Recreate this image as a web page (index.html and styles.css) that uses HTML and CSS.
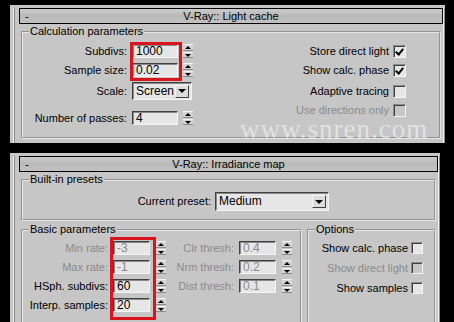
FILE: index.html
```html
<!DOCTYPE html>
<html lang="en">
<head>
    <meta charset="UTF-8">
    <title>V-Ray rollouts</title>
    <link rel="stylesheet" href="styles.css">
</head>
<body>
    <div class="rollout rollout-lc">
        <div class="frame">
            <div class="titlebar"><span class="minus">-</span><span class="title">V-Ray:: Light cache</span></div>
            <fieldset class="group group-calc">
                <legend>Calculation parameters</legend>
                <div class="calc-cols">
                    <div class="param-list">
                        <div class="param row-a"><span class="lbl">Subdivs:</span><span class="field">1000</span><span class="spin"><i></i><i></i></span></div>
                        <div class="param row-b"><span class="lbl">Sample size:</span><span class="field">0.02</span><span class="spin"><i></i><i></i></span></div>
                        <div class="param row-c"><span class="lbl">Scale:</span><span class="combo combo-scale">Screen<b class="drop"></b></span></div>
                        <div class="param row-d"><span class="lbl">Number of passes:</span><span class="field">4</span><span class="spin"><i></i><i></i></span></div>
                    </div>
                    <div class="check-list">
                        <div class="check ck-a"><span>Store direct light</span><span class="box on"></span></div>
                        <div class="check ck-b"><span>Show calc. phase</span><span class="box on"></span></div>
                        <div class="check ck-c"><span>Adaptive tracing</span><span class="box"></span></div>
                        <div class="check ck-d off"><span>Use directions only</span><span class="box"></span></div>
                    </div>
                </div>
            </fieldset>
        </div>
    </div>

    <div class="rollout rollout-im">
        <div class="frame">
            <div class="titlebar"><span class="minus">-</span><span class="title">V-Ray:: Irradiance map</span></div>
            <fieldset class="group group-presets">
                <legend>Built-in presets</legend>
                <div class="preset-row"><span class="lbl">Current preset:</span><span class="combo combo-preset">Medium<b class="drop"></b></span></div>
            </fieldset>
            <div class="group-pair">
                <fieldset class="group group-basic">
                    <legend>Basic parameters</legend>
                    <div class="bp-row">
                        <span class="lbl c1 off">Min rate:</span><span class="field sm off">-3</span><span class="spin"><i></i><i></i></span>
                        <span class="lbl c2 off">Clr thresh:</span><span class="field sm off">0.4</span><span class="spin"><i></i><i></i></span>
                    </div>
                    <div class="bp-row">
                        <span class="lbl c1 off">Max rate:</span><span class="field sm off">-1</span><span class="spin"><i></i><i></i></span>
                        <span class="lbl c2 off">Nrm thresh:</span><span class="field sm off">0.2</span><span class="spin"><i></i><i></i></span>
                    </div>
                    <div class="bp-row">
                        <span class="lbl c1">HSph. subdivs:</span><span class="field sm">60</span><span class="spin"><i></i><i></i></span>
                        <span class="lbl c2 off">Dist thresh:</span><span class="field sm off">0.1</span><span class="spin"><i></i><i></i></span>
                    </div>
                    <div class="bp-row">
                        <span class="lbl c1">Interp. samples:</span><span class="field sm">20</span><span class="spin"><i></i><i></i></span>
                    </div>
                </fieldset>
                <fieldset class="group group-options">
                    <legend>Options</legend>
                    <div class="check"><span>Show calc. phase</span><span class="box"></span></div>
                    <div class="check off"><span>Show direct light</span><span class="box"></span></div>
                    <div class="check"><span>Show samples</span><span class="box"></span></div>
                </fieldset>
            </div>
        </div>
    </div>

    <!-- red annotation boxes and watermark sit over the panels -->
    <div class="mark mark-top"></div>
    <div class="mark mark-bottom"></div>
    <div class="watermark">www.snren.com</div>
</body>
</html>
```

FILE: styles.css
```css
body {
    margin: 0;
    padding: 5px 0 0 10px;
    background-color: #000;
    font-family: "Liberation Sans", Arial, sans-serif;
    font-size: 11px;
    line-height: 13px;
    color: #000;
    height: 322px;
    box-sizing: border-box;
    overflow: hidden;
    position: relative;
}
.rollout {
    background-color: #c6c6c6;
    padding: 3px 0 0 3px;
    box-sizing: border-box;
}
.rollout-lc {
    width: 435px;
    height: 138px;
    margin-bottom: 10px;
}
.rollout-im {
    width: 430px;
    height: 175px;
}
.frame {
    height: 100%;
    border-left: 1px solid #f0f0f0;
    border-right: 1px solid #8a8a8a;
    box-shadow: inset 1px 0 #8a8a8a, inset -1px 0 #f0f0f0;
    padding: 0 1px 0 5px;
    box-sizing: border-box;
}
.titlebar {
    height: 16px;
    border: 1px solid #000;
    box-sizing: border-box;
    background: linear-gradient(#cbcbcb, #b9b9b9 50%, #c2c2c2);
    display: flex;
    align-items: center;
    position: relative;
}
.minus {
    padding-left: 5px;
    width: 20px;
}
.title {
    flex: 1;
    text-align: center;
    padding-right: 25px;
}
.group {
    margin: 1px 2px 0;
    padding: 0;
    border: 2px groove #e6e6e6;
    min-width: 0;
}
.group legend {
    padding: 0 1px;
    margin-left: 6px;
    line-height: 13px;
}
.lbl {
    text-align: right;
    white-space: nowrap;
}
.off {
    color: #8a8a8a;
}
.field {
    width: 46px;
    height: 14px;
    box-sizing: border-box;
    background-color: #e6e6e6;
    border-style: solid;
    border-width: 1px;
    border-color: #404040 #f4f4f4 #f4f4f4 #404040;
    box-shadow: inset 1px 1px #8a8a8a;
    padding: 0 0 0 3px;
    line-height: 12px;
    font-size: 12px;
}
.field.sm {
    width: 37px;
}
.spin {
    width: 10px;
    height: 14px;
    display: flex;
    flex-direction: column;
    gap: 1px;
}
.spin i {
    flex: 1;
    background-color: #d4d4d4;
    border-top: 1px solid #f4f4f4;
    border-bottom: 1px solid #8a8a8a;
    position: relative;
}
.spin i::after {
    content: "";
    position: absolute;
    left: 2px;
    top: 1px;
    border-left: 3px solid transparent;
    border-right: 3px solid transparent;
}
.spin i:first-child::after {
    border-bottom: 3px solid #000;
}
.spin i:last-child::after {
    border-top: 3px solid #000;
}
.combo {
    box-sizing: border-box;
    background-color: #e6e6e6;
    border-style: solid;
    border-width: 1px;
    border-color: #404040 #f4f4f4 #f4f4f4 #404040;
    box-shadow: inset 1px 1px #8a8a8a;
    display: flex;
    align-items: center;
    padding-left: 3px;
    font-size: 12px;
}
.drop {
    margin-left: auto;
    margin-right: 2px;
    width: 14px;
    height: 13px;
    box-sizing: border-box;
    background-color: #dcdcdc;
    border-style: solid;
    border-width: 1px;
    border-color: #f4f4f4 #404040 #404040 #f4f4f4;
    display: flex;
    align-items: center;
    justify-content: center;
}
.drop::after {
    content: "";
    border-left: 4px solid transparent;
    border-right: 4px solid transparent;
    border-top: 4px solid #000;
}

/* light cache */
.calc-cols {
    display: flex;
    justify-content: space-between;
    padding: 6px 33px 12px 0;
}
.param {
    display: flex;
    align-items: center;
    height: 14px;
}
.param .lbl {
    width: 104px;
}
.param .field, .param .combo {
    margin-left: 5px;
}
.param .spin {
    margin-left: 5px;
}
.row-b { margin-top: 5px; }
.row-c { margin-top: 5px; height: 18px; }
.row-d { margin-top: 11px; }
.combo-scale {
    width: 60px;
    height: 18px;
}
.check {
    display: flex;
    align-items: center;
    justify-content: flex-end;
    height: 14px;
}
.check .box {
    margin-left: 4px;
}
.ck-b { margin-top: 5px; }
.ck-c { margin-top: 7px; }
.ck-d { margin-top: 5px; }
.box {
    width: 13px;
    height: 13px;
    box-sizing: border-box;
    background-color: #e6e6e6;
    border-style: solid;
    border-width: 1px;
    border-color: #8a8a8a #f4f4f4 #f4f4f4 #8a8a8a;
    box-shadow: inset 1px 1px #404040;
    position: relative;
}
.off .box {
    background-color: #c6c6c6;
}
.box.on::after {
    content: "";
    position: absolute;
    left: 3px;
    top: 1px;
    width: 3px;
    height: 6px;
    border-right: 2px solid #000;
    border-bottom: 2px solid #000;
    transform: rotate(40deg);
}

/* irradiance map */
.preset-row {
    display: flex;
    align-items: center;
    padding: 6px 0 8px;
}
.preset-row .lbl {
    width: 188px;
}
.combo-preset {
    margin-left: 4px;
    width: 114px;
    height: 19px;
}
.group-pair {
    display: flex;
    margin-top: 2px;
}
.group-pair .group {
    margin-top: 0;
}
.group-basic {
    width: 277px;
    flex: none;
    padding: 5px 0 10px;
}
.group-options {
    flex: 1;
    margin-left: 3px;
    padding: 6px 11px 10px 0;
}
.group-options .check {
    height: 12px;
}
.group-options .check + .check {
    margin-top: 8px;
}
.group-options .box {
    width: 12px;
    height: 12px;
    margin-left: 3px;
}
.bp-row {
    display: flex;
    align-items: center;
    height: 14px;
}
.bp-row + .bp-row {
    margin-top: 5px;
}
.bp-row .c1 {
    width: 85px;
}
.bp-row .c2 {
    width: 64px;
    margin-left: 4px;
}
.bp-row .field {
    margin-left: 5px;
}
.bp-row .spin {
    margin-left: 6px;
}

/* overlays */
.mark {
    position: absolute;
    border: 3px solid #d8141e;
    box-sizing: border-box;
}
.mark-top {
    left: 130px;
    top: 42px;
    width: 52px;
    height: 39px;
}
.mark-bottom {
    left: 110px;
    top: 237px;
    width: 46px;
    height: 83px;
}
.watermark {
    position: absolute;
    left: 240px;
    top: 119px;
    font-family: "Liberation Serif", "Times New Roman", serif;
    font-size: 27px;
    line-height: 20px;
    letter-spacing: 1px;
    color: rgba(240, 240, 240, 0.7);
}
```
